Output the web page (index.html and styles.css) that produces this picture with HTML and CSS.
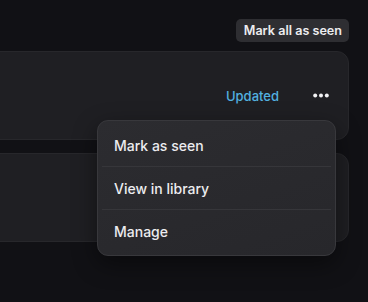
FILE: index.html
```html
<!DOCTYPE html>
<html>
<head>
<meta charset="utf-8">
<link rel="stylesheet" href="styles.css">
</head>
<body>
<div class="page">
  <div class="toolbar">
    <button class="mark-all">Mark all as seen</button>
  </div>
  <div class="list">
    <div class="card">
      <span class="status">Updated</span>
      <button class="more" aria-label="More">
        <svg width="16" height="5" viewBox="0 0 16 5"><circle cx="2.2" cy="2.5" r="2" fill="#f2f2f4"/><circle cx="8" cy="2.5" r="2" fill="#f2f2f4"/><circle cx="13.8" cy="2.5" r="2" fill="#f2f2f4"/></svg>
      </button>
      <div class="menu">
        <div class="menu-item">Mark as seen</div>
        <div class="sep"></div>
        <div class="menu-item">View in library</div>
        <div class="sep"></div>
        <div class="menu-item">Manage</div>
      </div>
    </div>
    <div class="card"></div>
  </div>
</div>
</body>
</html>
```

FILE: styles.css
```css
html, body {
  margin: 0;
  padding: 0;
  background: #111115;
  font-family: Inter, "Noto Sans", sans-serif;
  overflow: hidden;
}
.page {
  width: 368px;
  height: 302px;
  box-sizing: border-box;
  padding: 19px 19px 0 0;
}
.toolbar {
  display: flex;
  justify-content: flex-end;
}
.mark-all {
  height: 23px;
  padding: 0 7px 0 8px;
  border: none;
  border-radius: 5px;
  background: #2e2e32;
  color: #ececef;
  font-family: inherit;
  font-size: 12.6px;
  font-weight: 600;
}
.list {
  margin-top: 9px;
  margin-left: -20px;
  display: flex;
  flex-direction: column;
  gap: 13px;
}
.card {
  position: relative;
  height: 89px;
  box-sizing: border-box;
  border: 1px solid #27272b;
  border-radius: 12px;
  background: #1f1f23;
  display: flex;
  align-items: center;
  justify-content: flex-end;
  padding-right: 13px;
}
.status {
  color: #52b1e0;
  font-size: 13px;
  font-weight: 500;
  margin-right: 28px;
}
.more {
  width: 28px;
  height: 28px;
  padding: 0;
  border: none;
  background: transparent;
  display: flex;
  align-items: center;
  justify-content: center;
}
.menu {
  position: absolute;
  z-index: 2;
  top: 68px;
  right: 12px;
  width: 239px;
  box-sizing: border-box;
  padding: 3px 4px;
  border: 1px solid #38383c;
  border-radius: 11px;
  background: linear-gradient(160deg, #2c2c30, #27272b);
  box-shadow: 0 8px 24px rgba(0,0,0,0.45);
}
.menu-item {
  height: 42px;
  display: flex;
  align-items: center;
  padding-left: 12px;
  color: #ececef;
  font-size: 14px;
  font-weight: 500;
}
.sep {
  height: 1px;
  background: #36363a;
}
```
